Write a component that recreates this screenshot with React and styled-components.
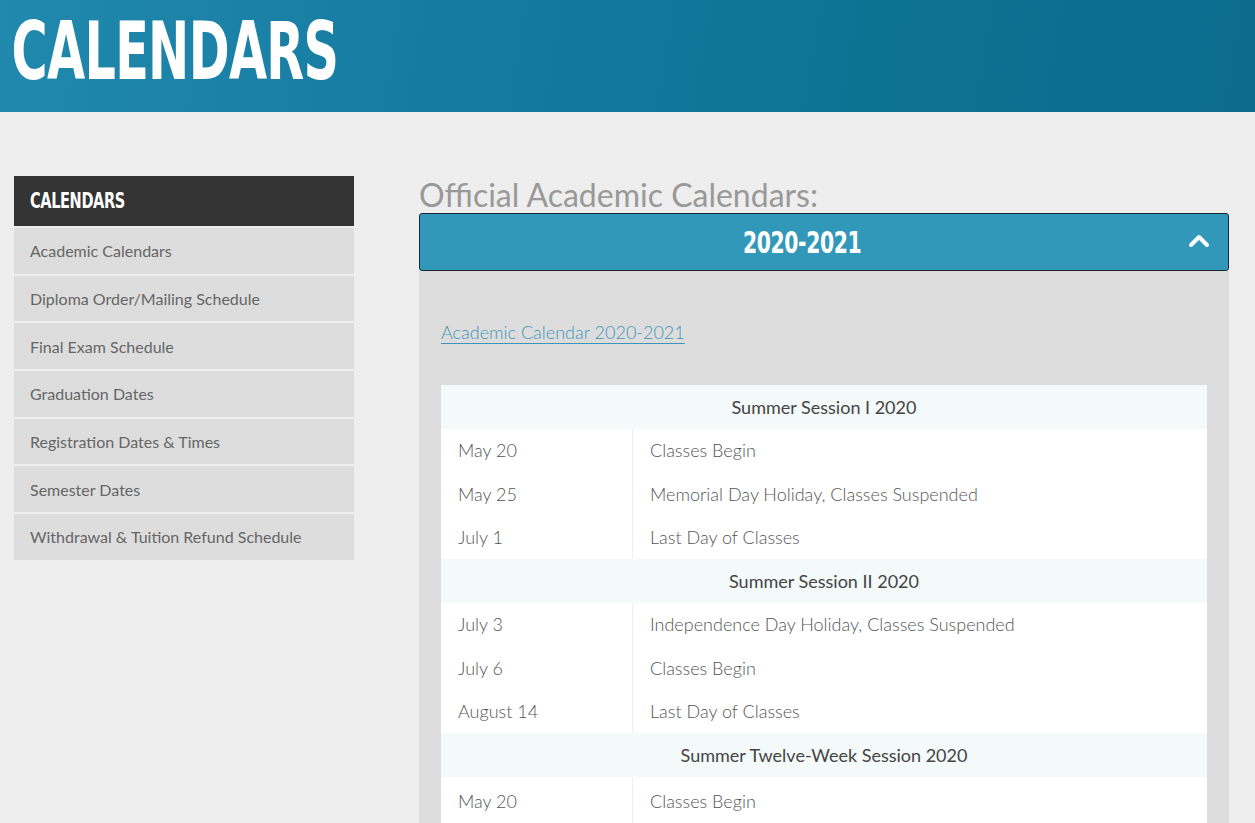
import React from 'react';
import styled, {createGlobalStyle} from 'styled-components';

const GlobalStyle = createGlobalStyle`
  html, body {
    margin: 0;
    padding: 0;
    background: #eeeeee;
    font-family: Lato, "Open Sans", sans-serif;
  }
`;

const Banner = styled.header`
  height: 112px;
  background: linear-gradient(100deg, #2189ad 0%, #177ba1 35%, #0e7293 70%, #0b6c8e 100%);
  overflow: hidden;
`;

const BannerTitle = styled.h1`
  margin: 0;
  padding: 6px 0 0 17px;
  font-family: "Liberation Sans Narrow", "DejaVu Sans Condensed", sans-serif;
  font-weight: 700;
  font-size: 81px;
  line-height: 90px;
  color: #fff;
  letter-spacing: -1px;
  transform: scaleX(0.676);
  transform-origin: left center;
`;

const Layout = styled.div`
  display: grid;
  grid-template-columns: 340px 810px;
  column-gap: 65px;
  padding: 64px 26px 0 14px;
`;

const SideNav = styled.nav`
  display: flex;
  flex-direction: column;
  gap: 2px;
  align-self: start;
`;

const SideHead = styled.div`
  height: 50px;
  background: #333333;
  color: #fff;
  display: flex;
  align-items: center;
  padding-left: 16px;
`;

const SideHeadText = styled.span`
  display: inline-block;
  font-family: "Liberation Sans Narrow", "DejaVu Sans Condensed", sans-serif;
  font-weight: 700;
  font-size: 21px;
  letter-spacing: -0.5px;
  transform: scaleX(0.77);
  transform-origin: left center;
`;

const SideLink = styled.a`
  height: 45.7px;
  background: #dddddd;
  color: #666;
  display: flex;
  align-items: center;
  padding-left: 16px;
  font-size: 16px;
  text-decoration: none;
`;

const Main = styled.main`
  display: flex;
  flex-direction: column;
`;

const PageTitle = styled.h2`
  margin: 0;
  font-weight: 400;
  font-size: 32px;
  line-height: 37px;
  color: #999;
`;

const AccordionHead = styled.div`
  height: 56px;
  background: #3298ba;
  border: 1px solid #1b2a30;
  border-radius: 3px;
  position: relative;
  display: flex;
  align-items: center;
  justify-content: center;
  padding-right: 44px;
`;

const YearLabel = styled.span`
  font-family: "Liberation Sans Narrow", "DejaVu Sans Condensed", sans-serif;
  font-weight: 700;
  font-size: 31px;
  color: #fff;
  letter-spacing: -0.5px;
  display: inline-block;
  transform: scaleX(0.73);
`;

const Chevron = styled.svg`
  position: absolute;
  right: 18px;
  top: 20px;
`;

const Panel = styled.div`
  background: #dddddd;
  padding: 50px 22px 22px 22px;
`;

const DocLink = styled.a`
  font-size: 18px;
  font-weight: 300;
  color: #3d95b9;
  text-decoration: underline;
  text-underline-offset: 4px;
  display: inline-block;
  margin-bottom: 42px;
`;

const Table = styled.table`
  width: 100%;
  border-collapse: collapse;
  font-size: 18px;
  font-weight: 300;
  color: #555;
`;

const SessionCell = styled.th`
  background: #f4f9f9;
  height: 43.5px;
  padding: 0;
  font-weight: 400;
  color: #444;
  text-align: center;
`;

const DateCell = styled.td`
  width: 174px;
  height: ${p => (p.$last ? '48px' : '43.5px')};
  padding: 0 0 0 17px;
  background: #fff;
  border-right: 1px solid #eeeeee;
`;

const EventCell = styled.td`
  padding: 0 0 0 17px;
  background: #fff;
`;

const sessions = [
  {
    name: 'Summer Session I 2020',
    rows: [
      ['May 20', 'Classes Begin'],
      ['May 25', 'Memorial Day Holiday, Classes Suspended'],
      ['July 1', 'Last Day of Classes'],
    ],
  },
  {
    name: 'Summer Session II 2020',
    rows: [
      ['July 3', 'Independence Day Holiday, Classes Suspended'],
      ['July 6', 'Classes Begin'],
      ['August 14', 'Last Day of Classes'],
    ],
  },
  {
    name: 'Summer Twelve-Week Session 2020',
    rows: [['May 20', 'Classes Begin']],
  },
];

const navItems = [
  'Academic Calendars',
  'Diploma Order/Mailing Schedule',
  'Final Exam Schedule',
  'Graduation Dates',
  'Registration Dates & Times',
  'Semester Dates',
  'Withdrawal & Tuition Refund Schedule',
];

const App = () => (
  <>
    <GlobalStyle />
    <Banner>
      <BannerTitle>CALENDARS</BannerTitle>
    </Banner>
    <Layout>
      <SideNav>
        <SideHead>
          <SideHeadText>CALENDARS</SideHeadText>
        </SideHead>
        {navItems.map(item => (
          <SideLink key={item} href="#">{item}</SideLink>
        ))}
      </SideNav>
      <Main>
        <PageTitle>Official Academic Calendars:</PageTitle>
        <AccordionHead>
          <YearLabel>2020-2021</YearLabel>
          <Chevron width="22" height="14" viewBox="0 0 22 14">
            <polyline points="3,11 11,3 19,11" fill="none" stroke="#fff" strokeWidth="4" strokeLinecap="round" strokeLinejoin="round" />
          </Chevron>
        </AccordionHead>
        <Panel>
          <DocLink href="#">Academic Calendar 2020-2021</DocLink>
          <Table>
            <tbody>
              {sessions.map((s, si) => (
                <React.Fragment key={s.name}>
                  <tr>
                    <SessionCell colSpan={2}>{s.name}</SessionCell>
                  </tr>
                  {s.rows.map(([date, event], ri) => (
                    <tr key={s.name + date}>
                      <DateCell $last={si === sessions.length - 1 && ri === s.rows.length - 1}>{date}</DateCell>
                      <EventCell>{event}</EventCell>
                    </tr>
                  ))}
                </React.Fragment>
              ))}
            </tbody>
          </Table>
        </Panel>
      </Main>
    </Layout>
  </>
);

export default App;
